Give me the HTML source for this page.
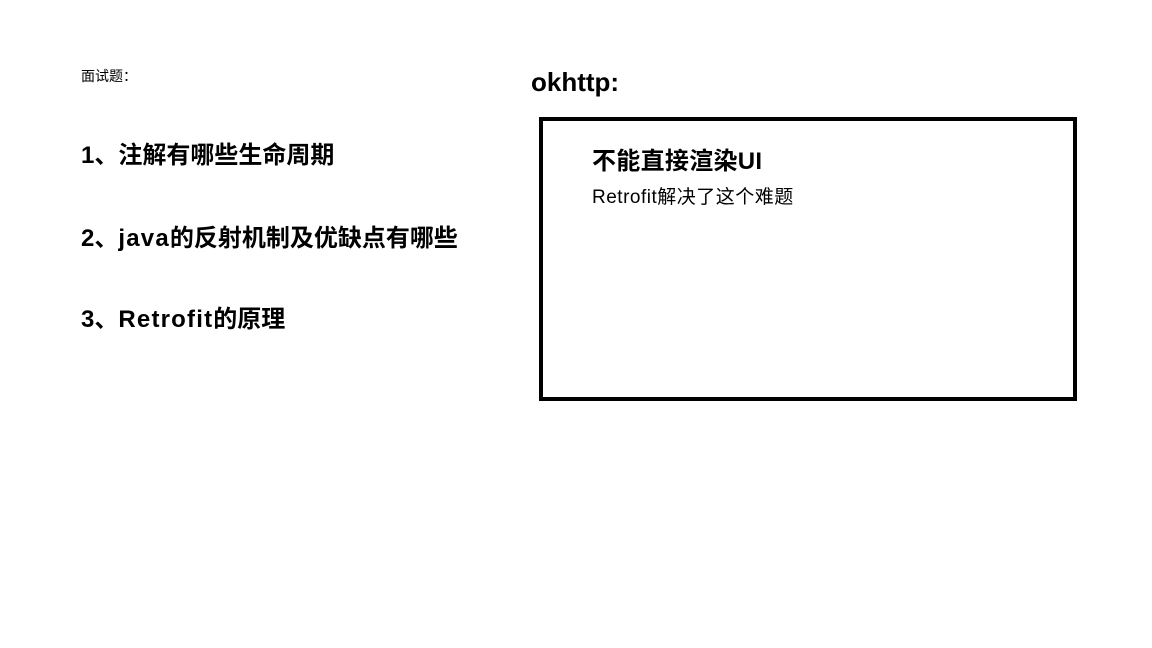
<!DOCTYPE html>
<html><head><meta charset="utf-8"><style>
body{margin:0;width:1152px;height:648px;background:#fff;position:relative;overflow:hidden;font-family:"Liberation Sans","Noto Sans CJK SC",sans-serif;color:#000}
.t{position:absolute;white-space:nowrap}
.b{font-weight:bold}
.l{letter-spacing:1.2px}
</style></head><body>
<div class="t" style="left:81px;top:66px;font-size:14px">面试题：</div>
<div class="t b" style="left:81px;top:135px;font-size:24px">1、注解有哪些生命周期</div>
<div class="t b" style="left:81px;top:218px;font-size:24px">2、<span class="l">java</span>的反射机制及优缺点有哪些</div>
<div class="t b" style="left:81px;top:299px;font-size:24px">3、<span class="l">Retrofit</span>的原理</div>
<div class="t b" style="left:531px;top:67px;font-size:26px">okhttp:</div>
<div style="position:absolute;left:539px;top:117px;width:530px;height:276px;border:4px solid #000"></div>
<div class="t b" style="left:592px;top:141px;font-size:24px;letter-spacing:0.3px">不能直接渲染UI</div>
<div class="t" style="left:592px;top:182px;font-size:19px;letter-spacing:0.5px">Retrofit解决了这个难题</div>
</body></html>
